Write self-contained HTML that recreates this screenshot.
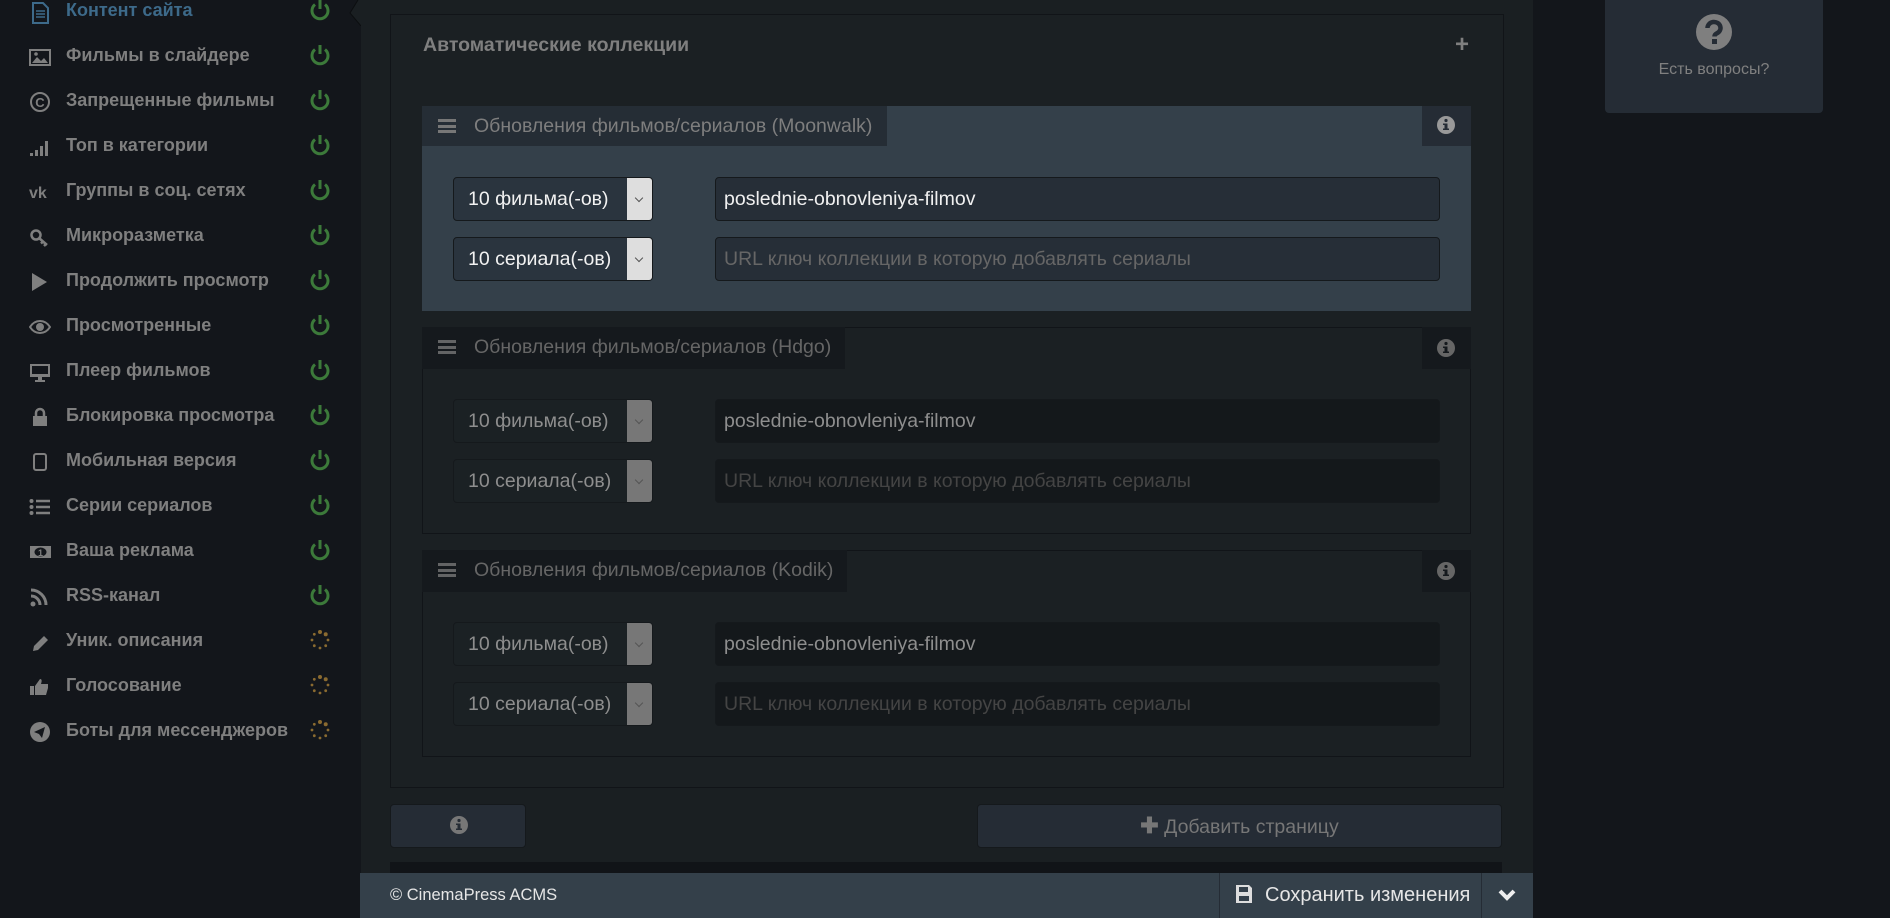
<!DOCTYPE html>
<html><head><meta charset="utf-8"><style>
*{box-sizing:border-box;margin:0;padding:0}
body{width:1890px;height:918px;overflow:hidden;background:#13161b;font-family:"Liberation Sans",Arial,sans-serif;position:relative}
.a{position:absolute}
.side{left:0;top:0;width:361px;height:918px;background:#13161b}
.it{position:absolute;left:0;width:361px;height:45px;font-weight:bold;font-size:18px;color:#7f7f7f;line-height:45px}
.it .t{position:absolute;left:66px;top:0}
.it .ic{position:absolute;left:29px;top:8px;width:22px;height:20px}
.it .pw{position:absolute;left:309px;top:11px}
.main{left:361px;top:0;width:1172px;height:918px;background:#1a1f22}
.panel{left:390px;top:14px;width:1114px;height:774px;background:#1b2023;border:1px solid #111418}
.tab{position:absolute;height:40px;font-size:19.5px;line-height:40px;color:#7e7e7e;padding-left:52px;white-space:nowrap}
.ham{position:absolute;left:16px;top:13px;width:18px;height:14px;border-top:3px solid #777;border-bottom:3px solid #777}
.ham:after{content:"";position:absolute;left:0;top:2.5px;width:18px;height:3px;background:#777}
.info{position:absolute;width:49px;height:40px}
.sel{position:absolute;left:453px;width:200px;height:44px;border-radius:4px;border:1px solid #15191c;font-size:19.5px;line-height:42px;padding-left:14px;white-space:nowrap}
.sel .ar{position:absolute;right:0;top:0;width:25px;height:42px;border-radius:0 3px 3px 0}
.sel .ar:after{content:"";position:absolute;left:9px;top:17px;width:5px;height:5px;border-right:1px solid #555;border-bottom:1px solid #555;transform:rotate(45deg)}
.inp{position:absolute;left:715px;width:725px;height:44px;border-radius:4px;border:1px solid #15191c;font-size:19.5px;line-height:42px;padding-left:8px;white-space:nowrap}
</style></head><body>
<div class="a side">
 <svg class="a" style="left:349px;top:0" width="13" height="26"><path d="M12 0 L12 26 L1 13 L9 0Z" fill="#1a1f22"/><path d="M12 26 L1 13 L9 0" stroke="#0c0e10" fill="none"/></svg>
</div>
<div id="items"></div>
<div class="a main"></div>
<div class="a panel">
 <div class="a" style="left:32px;top:19px;font-weight:bold;font-size:19.5px;color:#7f7f7f">Автоматические коллекции</div>
 <div class="a" style="left:1064px;top:16px;font-weight:bold;font-size:24px;color:#7f7f7f">+</div>
</div>
<div class="a" style="left:422px;top:106px;width:1049px;height:205px;background:#34404a"></div>
<div class="tab" style="left:422px;top:106px;width:465px;background:#252d35"><div class="ham"></div>Обновления фильмов/сериалов (Moonwalk)</div>
<div class="info" style="left:1422px;top:106px;background:#252c35"></div>
<div class="a" style="left:422px;top:327px;width:1049px;height:207px;background:#1b2023;border:1px solid #111418"></div>
<div class="tab" style="left:422px;top:327px;width:423px;height:42px;background:#15191d;color:#666"><div class="ham" style="opacity:.8"></div>Обновления фильмов/сериалов (Hdgo)</div>
<div class="info" style="left:1422px;top:327px;height:42px;background:#15191d"></div>
<div class="a" style="left:422px;top:550px;width:1049px;height:207px;background:#1b2023;border:1px solid #111418"></div>
<div class="tab" style="left:422px;top:550px;width:425px;height:42px;background:#15191d;color:#666"><div class="ham" style="opacity:.8"></div>Обновления фильмов/сериалов (Kodik)</div>
<div class="info" style="left:1422px;top:550px;height:42px;background:#15191d"></div>

<div class="sel" style="top:177px;background:#2a343e;color:#f2f2f2">10 фильма(-ов)<div class="ar" style="background:#dedede"></div></div>
<div class="sel" style="top:237px;background:#2a343e;color:#f2f2f2">10 сериала(-ов)<div class="ar" style="background:#dedede"></div></div>
<div class="inp" style="top:177px;background:#262e37;color:#f0f0f0">poslednie-obnovleniya-filmov</div>
<div class="inp" style="top:237px;background:#262e37;color:#666">URL ключ коллекции в которую добавлять сериалы</div>

<div class="sel" style="top:399px;background:#1b2124;color:#8e8e8e">10 фильма(-ов)<div class="ar" style="background:#777"></div></div>
<div class="sel" style="top:459px;background:#1b2124;color:#8e8e8e">10 сериала(-ов)<div class="ar" style="background:#777"></div></div>
<div class="inp" style="top:399px;background:#14181b;color:#8e8e8e">poslednie-obnovleniya-filmov</div>
<div class="inp" style="top:459px;background:#14181b;color:#444">URL ключ коллекции в которую добавлять сериалы</div>

<div class="sel" style="top:622px;background:#1b2124;color:#8e8e8e">10 фильма(-ов)<div class="ar" style="background:#777"></div></div>
<div class="sel" style="top:682px;background:#1b2124;color:#8e8e8e">10 сериала(-ов)<div class="ar" style="background:#777"></div></div>
<div class="inp" style="top:622px;background:#14181b;color:#8e8e8e">poslednie-obnovleniya-filmov</div>
<div class="inp" style="top:682px;background:#14181b;color:#444">URL ключ коллекции в которую добавлять сериалы</div>

<svg class="a" style="left:1436px;top:115px" width="20" height="20"><circle cx="10" cy="10" r="9" fill="#999"/><rect x="8.5" y="8.5" width="3" height="6.5" fill="#252c35"/><rect x="7" y="8.5" width="4" height="1.5" fill="#252c35"/><rect x="7" y="13.5" width="6" height="1.5" fill="#252c35"/><circle cx="10" cy="5.5" r="1.6" fill="#252c35"/></svg>
<svg class="a" style="left:1436px;top:338px" width="20" height="20"><circle cx="10" cy="10" r="9" fill="#666"/><rect x="8.5" y="8.5" width="3" height="6.5" fill="#15191d"/><rect x="7" y="8.5" width="4" height="1.5" fill="#15191d"/><rect x="7" y="13.5" width="6" height="1.5" fill="#15191d"/><circle cx="10" cy="5.5" r="1.6" fill="#15191d"/></svg>
<svg class="a" style="left:1436px;top:561px" width="20" height="20"><circle cx="10" cy="10" r="9" fill="#666"/><rect x="8.5" y="8.5" width="3" height="6.5" fill="#15191d"/><rect x="7" y="8.5" width="4" height="1.5" fill="#15191d"/><rect x="7" y="13.5" width="6" height="1.5" fill="#15191d"/><circle cx="10" cy="5.5" r="1.6" fill="#15191d"/></svg>

<div class="a" style="left:390px;top:804px;width:136px;height:44px;background:#252c35;border-radius:4px;border:1px solid #15191c"></div>
<svg class="a" style="left:449px;top:815px" width="20" height="20"><circle cx="10" cy="10" r="9" fill="#777"/><rect x="8.5" y="8.5" width="3" height="6.5" fill="#252c35"/><rect x="7" y="8.5" width="4" height="1.5" fill="#252c35"/><rect x="7" y="13.5" width="6" height="1.5" fill="#252c35"/><circle cx="10" cy="5.5" r="1.6" fill="#252c35"/></svg>
<div class="a" style="left:977px;top:804px;width:525px;height:44px;background:#252c35;border-radius:4px;border:1px solid #15191c;text-align:center;line-height:42px;font-size:19.5px;color:#777"><b style="font-size:22px">✚</b> Добавить страницу</div>
<div class="a" style="left:390px;top:862px;width:1112px;height:12px;background:#111418"></div>
<div class="a" style="left:360px;top:873px;width:1173px;height:45px;background:#34404a"></div>
<div class="a" style="left:390px;top:873px;line-height:45px;font-size:16.5px;color:#e6e6e6">© CinemaPress ACMS</div>
<div class="a" style="left:1219px;top:873px;width:1px;height:45px;background:#252c35"></div>
<div class="a" style="left:1481px;top:873px;width:1px;height:45px;background:#252c35"></div>
<svg class="a" style="left:1235px;top:884px" width="18" height="20"><path d="M1 1h13l3 3v15H1z" fill="#ddd"/><rect x="4" y="3" width="9" height="5" fill="#34404a"/><rect x="4" y="12" width="10" height="5" fill="#34404a"/></svg>
<div class="a" style="left:1265px;top:873px;line-height:45px;font-size:20px;color:#e6e6e6">Сохранить изменения</div>
<svg class="a" style="left:1497px;top:887px" width="20" height="16"><path d="M3 4l7 7 7-7" stroke="#eee" stroke-width="4" fill="none"/></svg>
<div class="a" style="left:1605px;top:0;width:218px;height:113px;background:#252c35;border-radius:0 0 4px 4px"></div>
<svg class="a" style="left:1696px;top:14px" width="36" height="36"><circle cx="18" cy="18" r="18" fill="#7f7f7f"/><path d="M11.5 14a6.5 6 0 1 1 9 5.5c-1.5.8-2 1.5-2 3" stroke="#252c35" stroke-width="4.5" fill="none"/><rect x="16" y="25" width="5" height="5" fill="#252c35"/></svg>
<div class="a" style="left:1605px;top:61px;width:218px;text-align:center;font-size:16px;color:#808080">Есть вопросы?</div>

<div class="it" style="top:-12px"><span class="ic"><svg width="22" height="22"><path d="M4 1h10l5 5v15H4z" fill="none" stroke="#3d6a8a" stroke-width="2"/><path d="M7 9h9M7 12h9M7 15h9" stroke="#3d6a8a" stroke-width="1.5"/></svg></span><span class="t" style="color:#3d6a8a">Контент сайта</span><svg class="pw" width="22" height="22"><path d="M6 5.5a8 8 0 1 0 10 0" stroke="#3c7a3a" stroke-width="3" fill="none"/><path d="M11 1v9" stroke="#3c7a3a" stroke-width="3"/></svg></div>
<script>
var items=[["Фильмы в слайдере","img"],["Запрещенные фильмы","c"],["Топ в категории","bar"],["Группы в соц. сетях","vk"],["Микроразметка","key"],["Продолжить просмотр","play"],["Просмотренные","eye"],["Плеер фильмов","mon"],["Блокировка просмотра","lock"],["Мобильная версия","tab"],["Серии сериалов","list"],["Ваша реклама","money"],["RSS-канал","rss"],["Уник. описания","pen",1],["Голосование","thumb",1],["Боты для мессенджеров","tg",1]];
var ic={img:'<rect x="1" y="3" width="20" height="15" fill="none" stroke="#7f7f7f" stroke-width="2"/><path d="M3 16l5-6 4 4 3-3 4 5z" fill="#7f7f7f"/><circle cx="7" cy="7" r="1.8" fill="#7f7f7f"/>',
c:'<circle cx="11" cy="10" r="9" fill="none" stroke="#7f7f7f" stroke-width="2"/><text x="11" y="15" font-size="13" text-anchor="middle" fill="#7f7f7f" font-family="Liberation Sans">C</text>',
bar:'<rect x="1" y="16" width="3" height="3" fill="#7f7f7f"/><rect x="6" y="13" width="3" height="6" fill="#7f7f7f"/><rect x="11" y="9" width="3" height="10" fill="#7f7f7f"/><rect x="16" y="4" width="3" height="15" fill="#7f7f7f"/>',
vk:'<text x="0" y="16" font-size="16" font-weight="bold" fill="#7f7f7f" font-family="Liberation Sans">vk</text>',
key:'<circle cx="7" cy="8" r="4.5" fill="none" stroke="#7f7f7f" stroke-width="2.5"/><path d="M10 11l8 7M14 14.5l-2 2M17 17l-2 2" stroke="#7f7f7f" stroke-width="2.5"/>',
play:'<path d="M3 1l15 9-15 9z" fill="#7f7f7f"/>',
eye:'<path d="M1 10c5-8 15-8 20 0-5 8-15 8-20 0z" fill="none" stroke="#7f7f7f" stroke-width="2"/><circle cx="11" cy="10" r="4" fill="#7f7f7f"/>',
mon:'<rect x="1" y="2" width="20" height="13" fill="#7f7f7f"/><rect x="3" y="4" width="16" height="8" fill="#13161b"/><rect x="9" y="15" width="4" height="3" fill="#7f7f7f"/><rect x="6" y="18" width="10" height="2" fill="#7f7f7f"/>',
lock:'<rect x="4" y="9" width="14" height="10" fill="#7f7f7f"/><path d="M7 9V6a4 4 0 0 1 8 0v3" stroke="#7f7f7f" stroke-width="2.5" fill="none"/>',
tab:'<rect x="5" y="2" width="12" height="16" rx="2" fill="none" stroke="#7f7f7f" stroke-width="2"/>',
list:'<circle cx="2.5" cy="4" r="2" fill="#7f7f7f"/><circle cx="2.5" cy="10" r="2" fill="#7f7f7f"/><circle cx="2.5" cy="16" r="2" fill="#7f7f7f"/><path d="M7 4h14M7 10h14M7 16h14" stroke="#7f7f7f" stroke-width="2.5"/>',
money:'<rect x="1" y="4" width="21" height="12" fill="#7f7f7f"/><ellipse cx="11.5" cy="10" rx="6" ry="4.5" fill="#13161b"/><text x="11.5" y="14" font-size="9" text-anchor="middle" fill="#7f7f7f" font-weight="bold" font-family="Liberation Sans">1</text>',
rss:'<circle cx="4" cy="17" r="2.5" fill="#7f7f7f"/><path d="M2 9a9 9 0 0 1 9 9M2 3a15 15 0 0 1 15 15" stroke="#7f7f7f" stroke-width="3" fill="none"/>',
pen:'<path d="M4 19l1-5L15 4l4 4L9 18z" fill="#7f7f7f"/>',
thumb:'<rect x="1" y="9" width="4" height="9" fill="#7f7f7f"/><path d="M6 9l5-7c2 0 2 2 1 5h7v4l-2 7H6z" fill="#7f7f7f"/>',
tg:'<circle cx="11" cy="10" r="10" fill="#7f7f7f"/><path d="M5 10l11-5-3 11-3-4z" fill="#13161b"/>'};
var pw='<svg class="pw" width="22" height="22"><path d="M6 5.5a8 8 0 1 0 10 0" stroke="#3c7a3a" stroke-width="3" fill="none"/><path d="M11 1v9" stroke="#3c7a3a" stroke-width="3"/></svg>';
var sp='<svg class="pw" width="22" height="22">';
for(var k=0;k<8;k++){var a=k*Math.PI/4-Math.PI/2;sp+='<circle cx="'+(11+8*Math.cos(a)).toFixed(1)+'" cy="'+(11+8*Math.sin(a)).toFixed(1)+'" r="'+(k<2?2:1.4)+'" fill="#8a6a30"/>';}
sp+='</svg>';
var h='';
items.forEach(function(x,i){h+='<div class="it" style="top:'+(33+45*i)+'px"><span class="ic"><svg width="22" height="22">'+ic[x[1]]+'</svg></span><span class="t">'+x[0]+'</span>'+(x[2]?sp:pw)+'</div>';});
document.getElementById('items').innerHTML=h;
</script>
</body></html>
